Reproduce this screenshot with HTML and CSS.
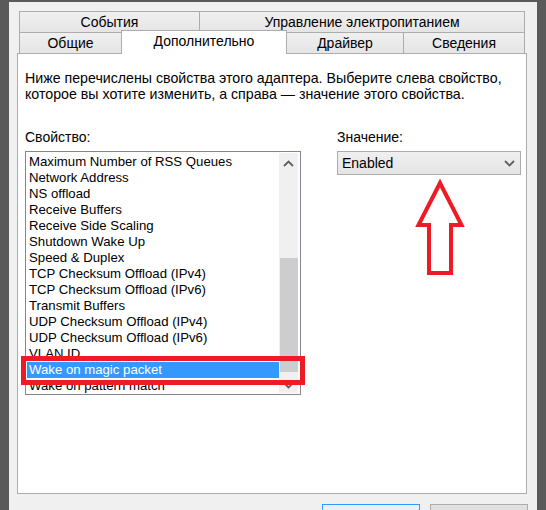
FILE: index.html
```html
<!DOCTYPE html>
<html lang="ru">
<head>
<meta charset="utf-8">
<link rel="stylesheet" href="styles.css">
</head>
<body>
<div class="window">
  <div class="tabs">
    <div class="tab-row">
      <div class="tab t-events">События</div>
      <div class="tab t-power last">Управление электропитанием</div>
    </div>
    <div class="tab-row row2">
      <div class="tab t-general">Общие</div>
      <div class="tab t-adv selected">Дополнительно</div>
      <div class="tab t-driver">Драйвер</div>
      <div class="tab t-info last">Сведения</div>
    </div>
  </div>
  <div class="panel">
    <p class="desc">Ниже перечислены свойства этого адаптера. Выберите слева свойство,<br>которое вы хотите изменить, а справа — значение этого свойства.</p>
    <div class="cols">
      <div class="col-left">
        <div class="label">Свойство:</div>
        <div class="listbox">
          <div class="items">
            <div class="item">Maximum Number of RSS Queues</div>
            <div class="item">Network Address</div>
            <div class="item">NS offload</div>
            <div class="item">Receive Buffers</div>
            <div class="item">Receive Side Scaling</div>
            <div class="item">Shutdown Wake Up</div>
            <div class="item">Speed &amp; Duplex</div>
            <div class="item">TCP Checksum Offload (IPv4)</div>
            <div class="item">TCP Checksum Offload (IPv6)</div>
            <div class="item">Transmit Buffers</div>
            <div class="item">UDP Checksum Offload (IPv4)</div>
            <div class="item">UDP Checksum Offload (IPv6)</div>
            <div class="item">VLAN ID</div>
            <div class="item active">Wake on magic packet</div>
            <div class="item">Wake on pattern match</div>
          </div>
          <div class="scrollbar">
            <div class="sb-btn">
              <svg width="11" height="7" viewBox="0 0 11 7"><path d="M1 6 L5.5 1.5 L10 6" fill="none" stroke="#606060" stroke-width="1.8"/></svg>
            </div>
            <div class="sb-track"></div>
            <div class="sb-thumb"></div>
            <div class="sb-btn down">
              <svg width="11" height="7" viewBox="0 0 11 7"><path d="M1 1 L5.5 5.5 L10 1" fill="none" stroke="#606060" stroke-width="1.8"/></svg>
            </div>
          </div>
        </div>
      </div>
      <div class="col-right">
        <div class="label">Значение:</div>
        <div class="combo">
          <span class="combo-text">Enabled</span>
          <svg class="chev" width="11" height="7" viewBox="0 0 11 7"><path d="M1 1 L5.5 5.5 L10 1" fill="none" stroke="#606060" stroke-width="1.8"/></svg>
        </div>
      </div>
    </div>
    <div class="mark-rect"></div>
    <svg class="mark-arrow" width="54" height="102" viewBox="0 0 54 102">
      <polygon points="26,7 47.5,49 37,49 37,97 15,97 15,49 4.5,49" fill="none" stroke="#ed1c24" stroke-width="4" stroke-linejoin="miter"/>
    </svg>
  </div>
  <div class="buttons">
    <div class="btn primary"></div>
    <div class="btn"></div>
  </div>
</div>
</body>
</html>
```
FILE: styles.css
```css
html, body {
  margin: 0;
  padding: 0;
  width: 546px;
  height: 510px;
  overflow: hidden;
  background: #f0f0f0;
}

.window {
  box-sizing: border-box;
  width: 546px;
  height: 510px;
  border-left: 9px solid #5a5a5a;
  border-right: 9px solid #5a5a5a;
  border-top: 2px solid #5a5a5a;
  padding: 9px 10px 0 8px;
  background: #f0f0f0;
  font-family: "Liberation Sans", Arial, sans-serif;
  color: #000;
  position: relative;
}

.tabs {
  margin: 0 1px 0 2px;
}

.tab-row {
  display: flex;
  height: 21px;
  align-items: flex-end;
}

.tab {
  box-sizing: border-box;
  height: 21px;
  border-top: 1px solid #acacac;
  border-left: 1px solid #acacac;
  background: linear-gradient(#f0f0f0, #e5e5e5);
  font-size: 14px;
  line-height: 20px;
  text-align: center;
  white-space: nowrap;
}

.tab.last {
  border-right: 1px solid #acacac;
}

.t-events { width: 180px; }
.t-power { width: 326px; }
.t-general { width: 102px; }
.t-adv { width: 166px; }
.t-driver { width: 116px; }
.t-info { width: 122px; }

.tab.selected {
  height: 24px;
  margin-bottom: -1px;
  background: #fff;
  border-right: 1px solid #acacac;
  line-height: 20px;
  position: relative;
  z-index: 2;
}

.tab.selected + .tab {
  border-left: none;
}

.panel {
  box-sizing: border-box;
  position: relative;
  height: 441px;
  background: #fff;
  border: 1px solid #adadad;
  padding: 16px 5px 0 7px;
}

.desc {
  margin: 0;
  font-size: 14.2px;
  line-height: 16px;
  white-space: nowrap;
}

.cols {
  display: flex;
  gap: 36px;
  margin-top: 27px;
}

.col-left { width: 276px; }
.col-right { width: 184px; }

.label {
  font-size: 14px;
  line-height: 16px;
  margin-bottom: 6px;
}

.listbox {
  box-sizing: border-box;
  height: 244px;
  border: 1px solid #828790;
  padding: 1px 2px 1px 1px;
  display: flex;
  overflow: hidden;
  background: #fff;
}

.items {
  flex: 1;
  overflow: hidden;
  padding-top: 1px;
}

.item {
  height: 16px;
  line-height: 16px;
  font-size: 13.2px;
  padding-left: 2px;
  white-space: nowrap;
}

.item.active {
  background: #3399ff;
  color: #fff;
}

.scrollbar {
  width: 19px;
  background: #f0f0f0;
  display: flex;
  flex-direction: column;
}

.sb-btn {
  height: 18px;
  display: flex;
  align-items: center;
  justify-content: center;
  padding-top: 2px;
  box-sizing: border-box;
}

.sb-btn.down {
  height: 21px;
  padding-top: 6px;
}

.sb-track {
  height: 87px;
}

.sb-thumb {
  height: 114px;
  background: #cdcdcd;
  margin-left: 1px;
}

.combo {
  box-sizing: border-box;
  height: 24px;
  border: 1px solid #acacac;
  background: linear-gradient(#f0f0f0, #e5e5e5);
  display: flex;
  align-items: center;
  justify-content: space-between;
  padding: 0 5px 0 4px;
  font-size: 14px;
}

.chev {
  display: block;
}

.mark-rect {
  position: absolute;
  left: 3px;
  top: 302px;
  width: 284px;
  height: 29px;
  box-sizing: border-box;
  border: 5px solid #ed1c24;
}

.mark-arrow {
  position: absolute;
  left: 396px;
  top: 122px;
}

.buttons {
  display: flex;
  justify-content: flex-end;
  gap: 10px;
  margin-top: 10px;
  margin-right: -1px;
}

.btn {
  box-sizing: border-box;
  width: 98px;
  height: 24px;
  border: 1px solid #adadad;
  background: #e1e1e1;
}

.btn.primary {
  border-color: #3399ff;
  background: #e5f1fb;
}
```
